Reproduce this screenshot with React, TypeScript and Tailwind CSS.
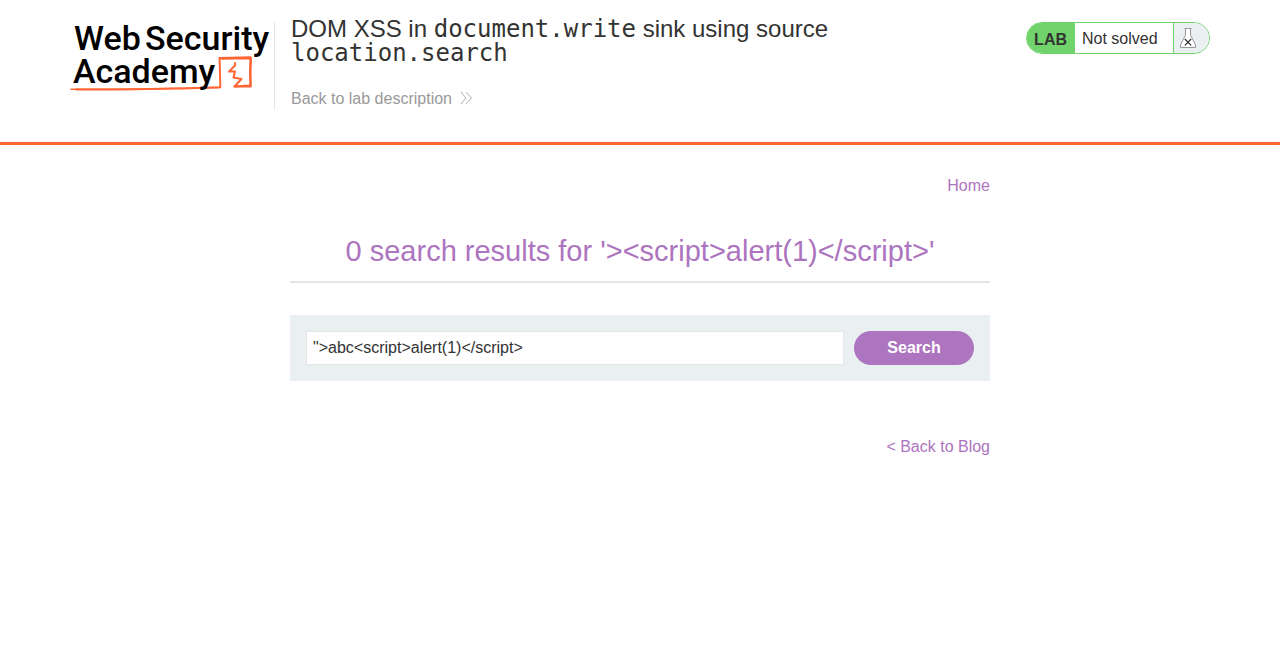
import React from "react";

function AcademyLogo() {
  return (
    <svg
      width="200"
      height="72"
      viewBox="0 0 200 72"
      role="img"
      aria-label="Web Security Academy"
      className="block shrink-0 overflow-visible"
    >
      <g fill="none" stroke="#ff6633" strokeLinecap="round" strokeLinejoin="round">
        <path d="M1 67.200C40 67.500 95 67 150 65.500" strokeWidth="1.500" />
        <path d="M6 67.600C50 67.800 80 67 120 66.200L150.300 65.300L150 50L149.500 36L180.500 35.300L180 50L180.300 63.500L164.500 64.500" strokeWidth="2" />
        <path d="M151 36.700L181 36.200L180.500 50L180.800 64.500L164.500 64.500L171.500 57L163.500 55.500L165 49.500L159 49.500L165 43.500V41" strokeWidth="2" />
      </g>
      <g className="fill-black font-['Roboto',sans-serif] text-[34px] font-medium">
        <text x="4" y="28">Web</text>
        <text x="75" y="28">Security</text>
        <text x="3" y="61">Academy</text>
      </g>
    </svg>
  );
}

function DoubleChevron() {
  return (
    <svg width="12" height="14" viewBox="0 0 12 14" fill="none" stroke="#999999" strokeWidth="0.800" aria-hidden="true">
      <path d="M1 0L6 6L1 12M6 0L11.500 6L6 12" />
    </svg>
  );
}

function Flask() {
  return (
    <svg width="16" height="20" viewBox="0 0 16 20" fill="none" aria-hidden="true">
      <path d="M5.500 .5V7L.5 17V19.500H15.500V17L10.500 7V.5" fill="#ffffff" stroke="#999999" />
      <path d="M4.500 .5H11.500" stroke="#999999" />
      <path d="M4.800 11L11.200 17.400M11.200 11L4.800 17.400" stroke="#333332" strokeWidth="1.200" />
    </svg>
  );
}

function LabStatus() {
  return (
    <div className="mt-[22px] flex h-8 shrink-0 overflow-hidden rounded-full border border-[#70d36b] text-base leading-8">
      <span className="bg-[#70d36b] pr-2 pl-[7px] pt-px font-bold">LAB</span>
      <span className="w-[98px] bg-white pl-[7px]">Not solved</span>
      <span className="flex w-9 items-center border-l border-[#70d36b] bg-[#eaeff2] pl-[6px]">
        <Flask />
      </span>
    </div>
  );
}

export default function App() {
  return (
    <div className="font-['Liberation_Sans',Arial,sans-serif] text-base text-[#333332]">
      <header className="flex items-start justify-between border-b-[3px] border-[#ff6633] px-[70px] pb-8">
        <div className="flex">
          <a href="#academy" className="mt-[22px] h-[88px] w-[205px] shrink-0 border-r border-[#e5e5e5]">
            <AcademyLogo />
          </a>
          <div className="max-w-[616px] pt-[17px] pl-4">
            <h1 className="text-2xl leading-6">
              DOM XSS in <code className="font-['DejaVu_Sans_Mono',monospace]">document.write</code> sink using source{" "}
              <code className="font-['DejaVu_Sans_Mono',monospace]">location.search</code>
            </h1>
            <a href="#description" className="mt-6 flex items-center gap-2 leading-5 text-[#999999]">
              Back to lab description
              <DoubleChevron />
            </a>
          </div>
        </div>
        <LabStatus />
      </header>

      <main className="mx-auto w-full max-w-[700px] pt-8 text-[#ad74c0]">
        <nav className="flex justify-end leading-[18px]">
          <a href="#home">Home</a>
        </nav>
        <section className="mt-8 border-b-2 border-[#e5e5e5] pt-[7px] pb-[13px] text-center">
          <h2 className="text-[29px] leading-[34px]">{"0 search results for '><script>alert(1)</script>'"}</h2>
        </section>
        <form className="mt-8 flex gap-[10px] bg-[#eaeff2] p-4" onSubmit={(event) => event.preventDefault()}>
          <input
            type="text"
            aria-label="Search the blog"
            defaultValue={'">abc<script>alert(1)</script>'}
            className="h-[34px] min-w-0 flex-1 border border-[#e5e5e5] bg-white px-[6px] text-[#333332] outline-none"
          />
          <button type="submit" className="h-[34px] w-[120px] rounded-full bg-[#ad74c0] font-bold text-white">
            Search
          </button>
        </form>
        <div className="mt-14 flex justify-end leading-5">
          <a href="#blog">&lt; Back to Blog</a>
        </div>
      </main>
    </div>
  );
}
